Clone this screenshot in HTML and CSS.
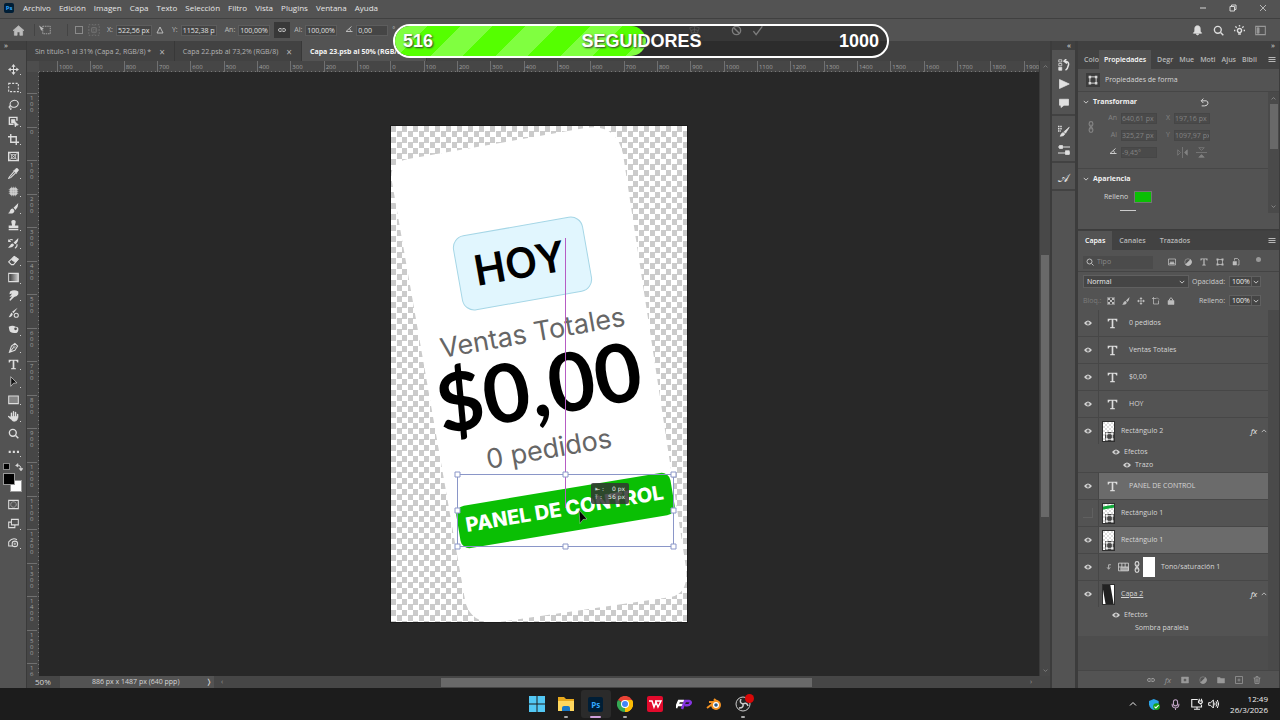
FILE: index.html
```html
<!DOCTYPE html>
<html lang="es">
<head>
  <meta charset="UTF-8">
  <title>Capa 23.psb al 50%</title>
  <link rel="stylesheet" href="styles.css">
</head>
<body>
  <!-- icon set -->
  <svg class="sprite" aria-hidden="true">
    <symbol id="home" viewBox="0 0 16 16"><path fill="currentColor" d="M8 1 0 8h2v7h4v-5h4v5h4V8h2z"/></symbol>
    <symbol id="pick" viewBox="0 0 16 16"><path d="M5 3h10v10H5z" stroke-dasharray="2 1"/><path fill="currentColor" stroke="none" d="M0 2l6 4-3 3z"/></symbol>
    <symbol id="ref" viewBox="0 0 16 16"><path d="M1 1h14v14H1z" stroke-dasharray="2 2"/><path d="M5 5h6v6H5z"/><path d="M8 1v14M1 8h14" stroke-dasharray="1 2"/></symbol>
    <symbol id="delta" viewBox="0 0 16 16"><path stroke-width="2" d="M8 2 2 14h12z"/></symbol>
    <symbol id="chain" viewBox="0 0 16 16"><path stroke-width="2" d="M7 5H4a3 3 0 0 0 0 6h3M9 5h3a3 3 0 0 1 0 6H9M5 8h6"/></symbol>
    <symbol id="chainv" viewBox="0 0 10 20"><rect x="2" y="1" width="6" height="8" rx="3" stroke-width="2"/><rect x="2" y="11" width="6" height="8" rx="3" stroke-width="2"/><path stroke-width="2" d="M5 6v8"/></symbol>
    <symbol id="angle" viewBox="0 0 16 16"><path stroke-width="2" d="M13 3 2 13h13M8 7c2 1 3 3 3 6"/></symbol>
    <symbol id="warp" viewBox="0 0 16 16"><path d="M1 4q7-4 14 0l-3 8q-4-3-8 0zM3 8q5-3 10 0M8 2v9"/></symbol>
    <symbol id="cancel" viewBox="0 0 16 16"><circle cx="8" cy="8" r="6" stroke-width="2"/><path stroke-width="2" d="m4 4 8 8"/></symbol>
    <symbol id="check" viewBox="0 0 16 16"><path stroke-width="2" d="m2 9 4 5 9-12"/></symbol>
    <symbol id="bell" viewBox="0 0 16 16"><path fill="currentColor" d="M8 1c-3 0-4 2-4 5v3l-2 3h12l-2-3V6c0-3-1-5-4-5zM6 13h4q-2 3-4 0z"/></symbol>
    <symbol id="search" viewBox="0 0 16 16"><circle cx="7" cy="7" r="5" stroke-width="2"/><path stroke-width="2" d="m11 11 4 4"/></symbol>
    <symbol id="bulb" viewBox="0 0 16 16"><circle cx="8" cy="8" r="3" stroke-width="2"/><path stroke-width="2" d="M6 13h4M8 0v2M0 8h2M14 8h2M2 2l2 2M14 2l-2 2"/></symbol>
    <symbol id="space" viewBox="0 0 16 16"><path stroke-width="1.5" d="M1 2h14v12H1z"/><path fill="currentColor" d="M3 4h3v8H3z"/></symbol>
    <symbol id="min" viewBox="0 0 16 16"><path stroke-width="2" d="M2 8h12"/></symbol>
    <symbol id="restore" viewBox="0 0 16 16"><path stroke-width="2" d="M2 5h9v9H2zM5 5V2h9v9h-3"/></symbol>
    <symbol id="close" viewBox="0 0 16 16"><path stroke-width="1.5" d="m2 2 12 12M14 2 2 14"/></symbol>
    <symbol id="move" viewBox="0 0 16 16"><path d="M8 2v12M2 8h12" stroke-width="1.5"/><path fill="currentColor" stroke="none" d="M8 0l3 4H5zM8 16l3-4H5zM0 8l4-3v6zM16 8l-4-3v6z"/></symbol>
    <symbol id="marquee" viewBox="0 0 16 16"><path stroke-width="1.5" stroke-dasharray="3 2" d="M1 2h14v12H1z"/></symbol>
    <symbol id="lasso" viewBox="0 0 16 16"><ellipse cx="9" cy="7" rx="6" ry="5" stroke-width="1.5" transform="rotate(-15 9 7)"/><path stroke-width="1.5" d="M4 10c-3 0-3 3-1 3s2 2 0 3"/></symbol>
    <symbol id="objsel" viewBox="0 0 16 16"><path stroke-width="2" d="M8 12H2V2h11v5"/><path fill="currentColor" d="M5 5h5v5H5zM9 7l6 6-3 .5-1.500 2.500z"/></symbol>
    <symbol id="crop" viewBox="0 0 16 16"><path stroke-width="2" d="M4 0v12h12M0 4h12v12"/></symbol>
    <symbol id="frame" viewBox="0 0 16 16"><path stroke-width="2" d="M1 2h14v12H1z"/><path d="m1 2 14 12M15 2 1 14M5 5h6v6H5z"/></symbol>
    <symbol id="dropper" viewBox="0 0 16 16"><path stroke-width="1.5" d="m9 5-7 8-1 2 3-1 7-7"/><path fill="currentColor" d="m8 4 4 4 1-2q4-3 1-5-2-2-4 2z"/></symbol>
    <symbol id="patch" viewBox="0 0 16 16"><rect x="3" y="3" width="10" height="10" rx="2" fill="currentColor" fill-opacity=".7"/><path d="M5 1v14M8 1v14M11 1v14M1 5h14M1 8h14M1 11h14" stroke-opacity=".6"/></symbol>
    <symbol id="brush" viewBox="0 0 16 16"><path fill="currentColor" stroke="none" d="M15 0 8 7l3 3q4-4 4-10zM7 8q-3 0-4 3-.5 3-3 4 6 1 8-1 2-2 1-4z"/></symbol>
    <symbol id="stamp" viewBox="0 0 16 16"><path fill="currentColor" stroke="none" d="M8 0q4 0 3 4l-1 4h5v4H1V8h5L5 4q-1-4 3-4zM1 13h14v2H1z"/></symbol>
    <symbol id="histbrush" viewBox="0 0 16 16"><path fill="currentColor" stroke="none" d="m15 0-7 7 3 2q4-3 4-9zM7 8q-3 0-4 3l-3 3q6 1 9-4z"/><path d="M1 5q2-4 6-2M1 2v3h3M13 9q1 4-3 6" stroke-width="1.500"/></symbol>
    <symbol id="eraser" viewBox="0 0 16 16"><path stroke-width="1.500" d="m9 2 6 4-7 8H5l-4-4z"/><path fill="currentColor" d="m9 2 6 4-4 5-6-4z"/></symbol>
    <symbol id="gradient" viewBox="0 0 16 16"><path fill="url(#fade)" stroke-width="1.500" d="M1 2h14v12H1z"/></symbol>
    <symbol id="smudge" viewBox="0 0 16 16"><path fill="currentColor" stroke="none" d="M3 2q6-3 12 0v4q-2 4-6 4l-6 6-1-2 4-5-4 1 4-5-4 1z"/></symbol>
    <symbol id="mixer" viewBox="0 0 16 16"><path fill="currentColor" stroke="none" d="M14 1 6 7l2 2zM5 8 1 15q5-1 6-5z"/><circle cx="12" cy="12" r="3" stroke-width="1.500"/></symbol>
    <symbol id="sponge" viewBox="0 0 16 16"><path fill="currentColor" stroke="none" fill-rule="evenodd" d="M1 4q6-3 10 0 5 0 4 5-1 5-6 4-6 0-7-4zm8 3a2 2 0 1 0 4 0 2 2 0 1 0-4 0z"/></symbol>
    <symbol id="pen" viewBox="0 0 16 16"><path stroke-width="1.500" d="m10 2 4 4-4 6-8 3 3-9zM2 15l6-7"/><circle cx="9" cy="7" r="1.500"/></symbol>
    <symbol id="type" viewBox="0 0 16 16"><path fill="currentColor" stroke="none" d="M1 1h14v4h-1.500Q13 2.500 11 2.500H9.200V13l2.300.6V15h-7v-1.400l2.300-.6V2.500H5Q3 2.500 2.500 5H1z"/></symbol>
    <symbol id="arrow" viewBox="0 0 16 16"><path fill="#111" stroke="#ddd" d="m4 1 9 9-5 .5L4 15z"/></symbol>
    <symbol id="shape" viewBox="0 0 16 16"><path fill="#858585" stroke-width="1.500" d="M1 3h14v11H1z"/></symbol>
    <symbol id="hand" viewBox="0 0 16 16"><path stroke-linecap="round" stroke-width="2" d="M5 9V3M8 8V1M11 8V2M14 9V5M4 11 1 8"/><path fill="currentColor" d="M4 8h10v3q-1 4-5 4-3 0-5-4z"/></symbol>
    <symbol id="dots" viewBox="0 0 16 16"><path fill="currentColor" stroke="none" d="M1 7h3v3H1zM7 7h3v3H7zM13 7h3v3h-3z"/></symbol>
    <symbol id="swap" viewBox="0 0 16 16"><path stroke-width="2" d="M3 5q9-2 9 7"/><path fill="currentColor" d="M1 5l5-4v7zM8 11h8l-4 5z"/></symbol>
    <symbol id="mask" viewBox="0 0 16 16"><path stroke-width="1.500" d="M1 2h14v12H1z"/><circle cx="8" cy="8" r="4" stroke-dasharray="2 1"/></symbol>
    <symbol id="screens" viewBox="0 0 16 16"><path stroke-width="1.500" d="M5 2h10v8H5zM5 6H1v8h9v-4"/></symbol>
    <symbol id="genai" viewBox="0 0 16 16"><path stroke-width="1.500" d="M1 7q6-7 12-3M1 7v6h6"/><circle cx="10" cy="10" r="4" stroke-width="1.500"/><path d="M10 8v4M8 10h4"/></symbol>
    <symbol id="history" viewBox="0 0 16 16"><path d="M1 1h4v3H1zM1 6h4v3H1z"/><path fill="currentColor" d="M1 11h4v4H1z"/><path stroke-width="2" d="M9 3q6 0 5 5-1 5-4 7M11 0 8 3l4 3"/></symbol>
    <symbol id="play" viewBox="0 0 16 16"><path fill="currentColor" d="m2 2 13 6-13 6z"/></symbol>
    <symbol id="note" viewBox="0 0 16 16"><path fill="currentColor" d="M2 3h12v8H8l-4 3v-3H2z"/></symbol>
    <symbol id="brushset" viewBox="0 0 16 16"><path stroke-width="2" stroke-dasharray="2 1" d="M0 2h6M0 5h6M0 8h4"/><path fill="currentColor" d="M15 3 8 9l2 2zM7 10q-3 1-4 5 5 0 6-3z"/></symbol>
    <symbol id="sliders" viewBox="0 0 16 16"><path stroke-width="1.500" d="M0 4h16M0 12h16"/><path fill="currentColor" d="M2 2h4v4H2zM10 9h5v5h-5z"/></symbol>
    <symbol id="burger" viewBox="0 0 16 16"><path stroke-width="2" d="M1 3h14M1 7h14M1 11h14"/></symbol>
    <symbol id="bbox" viewBox="0 0 16 16"><path stroke-width="1.500" d="M3 3h10v10H3z"/><path fill="currentColor" stroke="none" d="M1 1h4v4H1zM11 1h4v4h-4zM1 11h4v4H1zM11 11h4v4h-4z"/></symbol>
    <symbol id="reset" viewBox="0 0 16 16"><path stroke-width="1.500" d="M3 5h8q4 1 3 5-1 4-6 4H3M6 1 2 5l4 4"/></symbol>
    <symbol id="down" viewBox="0 0 16 16"><path stroke-width="2" d="m2 5 6 6 6-6"/></symbol>
    <symbol id="up" viewBox="0 0 16 16"><path stroke-width="2" d="m2 11 6-6 6 6"/></symbol>
    <symbol id="fliph" viewBox="0 0 16 16"><path d="M8 0v16M1 4v8l4-4z"/><path fill="currentColor" d="M15 4v8l-4-4z"/></symbol>
    <symbol id="flipv" viewBox="0 0 16 16"><path d="M0 8h16M4 1h8L8 5z"/><path fill="currentColor" d="M4 15h8l-4-4z"/></symbol>
    <symbol id="image" viewBox="0 0 16 16"><path stroke-width="1.500" d="M1 2h14v12H1z"/><path fill="currentColor" d="m3 12 3-5 2 3 2-3 3 5z"/></symbol>
    <symbol id="half" viewBox="0 0 16 16"><circle cx="8" cy="8" r="6.500"/><path fill="currentColor" d="M13 3 3 13A7 7 0 0 0 13 3z"/></symbol>
    <symbol id="smart" viewBox="0 0 16 16"><path stroke-width="1.500" d="M5 5V1h6l3 3v10h-3"/><path fill="currentColor" d="M2 7h7v7H2z"/></symbol>
    <symbol id="checker" viewBox="0 0 16 16"><path d="M1 1h14v14H1z"/><path fill="currentColor" stroke="none" d="M2 2h4v4H2zM10 2h4v4h-4zM6 6h4v4H6zM2 10h4v4H2zM10 10h4v4h-4z"/></symbol>
    <symbol id="artboard" viewBox="0 0 16 16"><path stroke-width="1.500" d="M3 0v14h10V7M0 3h9M10 1l4 4"/></symbol>
    <symbol id="lock" viewBox="0 0 16 16"><path stroke-width="2" d="M5 7V4q3-5 6 0v3"/><path fill="currentColor" d="M2 7h12v8H2z"/></symbol>
    <symbol id="eye" viewBox="0 0 16 16"><path fill="currentColor" stroke="none" fill-rule="evenodd" d="M0 8q8-10 16 0-8 10-16 0zm5 0a3 3 0 1 0 6 0 3 3 0 1 0-6 0z"/><circle cx="8" cy="8" r="1" fill="currentColor" stroke="none"/></symbol>
    <symbol id="clip" viewBox="0 0 16 16"><path stroke-width="2" d="M13 2H7v10M3 9l4 5 4-5"/></symbol>
    <symbol id="hue" viewBox="0 0 20 16"><path stroke-width="1.500" d="M1 1h18v14H1zM1 8h18M7 1v7M13 1v7"/><path fill="currentColor" fill-opacity=".6" d="M5 9h14v5H5z"/></symbol>
    <symbol id="addmask" viewBox="0 0 16 16"><path fill="currentColor" fill-rule="evenodd" d="M1 2h14v12H1zm4 6a3 3 0 1 0 6 0 3 3 0 1 0-6 0z"/></symbol>
    <symbol id="folder" viewBox="0 0 16 16"><path fill="currentColor" d="M1 3h5l2 2h7v9H1z"/></symbol>
    <symbol id="plus" viewBox="0 0 16 16"><path stroke-width="1.500" d="M1 1h14v14H1zM8 5v6M5 8h6"/></symbol>
    <symbol id="trash" viewBox="0 0 16 16"><path stroke-width="1.500" d="M1 4h14M6 4V1h4v3M3 4l1 11h8l1-11M6 6v7M8 6v7M10 6v7"/></symbol>
    <symbol id="mic" viewBox="0 0 16 16"><rect x="5" y="1" width="6" height="9" rx="3" stroke-width="1.500"/><path d="M3 7q0 6 5 6t5-6M8 13v3" stroke-width="1.500"/></symbol>
    <symbol id="monitor" viewBox="0 0 16 16"><path stroke-width="1.500" d="M9 2H1v10h13V9M4 15h8M8 12v3M11 1v3M14 1v3M10 4h5v2l-2 2-3-2z"/></symbol>
    <symbol id="speaker" viewBox="0 0 18 16"><path stroke-width="1.500" d="M1 6h3l4-4v12l-4-4H1zM10 6q1 2 0 4M12 4q3 4 0 8M14 2q4 6 0 12"/></symbol>
    <linearGradient id="fade"><stop stop-color="#333"/><stop offset="1" stop-color="#ccc"/></linearGradient>
  </svg>

  <header class="menubar">
    <span class="ps-logo">Ps</span>
    <nav class="menus">
      <button>Archivo</button><button>Edición</button><button>Imagen</button><button>Capa</button><button>Texto</button><button>Selección</button><button>Filtro</button><button>Vista</button><button>Plugins</button><button>Ventana</button><button>Ayuda</button>
    </nav>
    <div class="window-buttons">
      <button aria-label="Minimizar"><svg class="icon"><use href="#min"/></svg></button>
      <button aria-label="Restaurar"><svg class="icon"><use href="#restore"/></svg></button>
      <button aria-label="Cerrar"><svg class="icon"><use href="#close"/></svg></button>
    </div>
  </header>

  <div class="options">
    <button class="home" aria-label="Inicio"><svg class="icon"><use href="#home"/></svg></button>
    <button class="preset" aria-label="Transformar"><svg class="icon"><use href="#pick"/></svg></button>
    <input type="checkbox" aria-label="Punto de referencia">
    <svg class="icon ref"><use href="#ref"/></svg>
    <label for="pos-x">X:</label><input id="pos-x" class="pos" type="text" value="522,56 px">
    <svg class="icon delta"><use href="#delta"/></svg>
    <label for="pos-y">Y:</label><input id="pos-y" class="pos" type="text" value="1152,38 px">
    <label class="spaced" for="scale-w">An:</label><input id="scale-w" type="text" value="100,00%">
    <button class="link" aria-label="Vincular"><svg class="icon"><use href="#chain"/></svg></button>
    <label for="scale-h">Al:</label><input id="scale-h" type="text" value="100,00%">
    <label class="spaced" for="rot" aria-label="Ángulo"><svg class="icon"><use href="#angle"/></svg></label><input id="rot" type="text" value="0,00">
    <span class="degree">°</span>
    <div class="commit">
      <svg class="icon dim"><use href="#warp"/></svg>
      <button aria-label="Cancelar"><svg class="icon"><use href="#cancel"/></svg></button>
      <button aria-label="Aceptar"><svg class="icon"><use href="#check"/></svg></button>
    </div>
    <div class="app-actions">
      <button aria-label="Avisos"><svg class="icon"><use href="#bell"/></svg></button>
      <button aria-label="Buscar"><svg class="icon"><use href="#search"/></svg></button>
      <button aria-label="Novedades"><svg class="icon"><use href="#bulb"/></svg></button>
      <button class="dim" aria-label="Espacio de trabajo"><svg class="icon"><use href="#space"/></svg></button>
    </div>
  </div>

  <main class="workspace">
    <aside class="toolbox">
      <div class="dock-head left">»</div>
      <div class="tools">
        <button aria-label="Mover"><svg class="icon"><use href="#move"/></svg></button>
        <button aria-label="Marco rectangular"><svg class="icon"><use href="#marquee"/></svg></button>
        <button aria-label="Lazo"><svg class="icon"><use href="#lasso"/></svg></button>
        <button aria-label="Selección de objetos"><svg class="icon"><use href="#objsel"/></svg></button>
        <button aria-label="Recortar"><svg class="icon"><use href="#crop"/></svg></button>
        <button class="single" aria-label="Marco"><svg class="icon"><use href="#frame"/></svg></button>
        <button aria-label="Cuentagotas"><svg class="icon"><use href="#dropper"/></svg></button>
        <button aria-label="Pincel corrector"><svg class="icon"><use href="#patch"/></svg></button>
        <button aria-label="Pincel"><svg class="icon"><use href="#brush"/></svg></button>
        <button aria-label="Tampón de clonar"><svg class="icon"><use href="#stamp"/></svg></button>
        <button aria-label="Pincel de historia"><svg class="icon"><use href="#histbrush"/></svg></button>
        <button aria-label="Borrador"><svg class="icon"><use href="#eraser"/></svg></button>
        <button aria-label="Degradado"><svg class="icon"><use href="#gradient"/></svg></button>
        <button aria-label="Dedo"><svg class="icon"><use href="#smudge"/></svg></button>
        <button class="single" aria-label="Pincel mezclador"><svg class="icon"><use href="#mixer"/></svg></button>
        <button aria-label="Esponja"><svg class="icon"><use href="#sponge"/></svg></button>
        <button aria-label="Pluma"><svg class="icon"><use href="#pen"/></svg></button>
        <button aria-label="Texto"><svg class="icon"><use href="#type"/></svg></button>
        <button aria-label="Selección de trazado"><svg class="icon"><use href="#arrow"/></svg></button>
        <button aria-label="Rectángulo"><svg class="icon"><use href="#shape"/></svg></button>
        <button aria-label="Mano"><svg class="icon"><use href="#hand"/></svg></button>
        <button class="single" aria-label="Zoom"><svg class="icon"><use href="#search"/></svg></button>
        <button aria-label="Más"><svg class="icon"><use href="#dots"/></svg></button>
      </div>
      <div class="swap-row"><i class="mini-swatch"></i><svg class="icon"><use href="#swap"/></svg></div>
      <div class="swatches"><i class="back"></i><i class="front"></i></div>
      <div class="modes">
        <button class="single" aria-label="Máscara rápida"><svg class="icon"><use href="#mask"/></svg></button>
        <button aria-label="Modo de pantalla"><svg class="icon"><use href="#screens"/></svg></button>
        <button aria-label="Generar"><svg class="icon"><use href="#genai"/></svg></button>
      </div>
    </aside>

    <section class="document">
      <div class="doc-tabs">
        <button>Sin título-1 al 31% (Capa 2, RGB/8) * <b>×</b></button>
        <button>Capa 22.psb al 73,2% (RGB/8) <b>×</b></button>
        <button class="active">Capa 23.psb al 50% (RGB/8) <b>×</b></button>
      </div>
      <div class="doc-body">
        <div class="ruler-corner"></div>
        <div class="ruler-x"><div class="track" id="ruler-x"></div></div>
        <div class="ruler-y"><div class="track" id="ruler-y"></div></div>
        <div class="canvas">
          <svg class="artboard" viewBox="0 0 296 496">
            <path fill="#fff" d="M1 56Q-3 37 17 33L194 2Q225-3 232 28L295 442Q298 467 280 471L108 496Q79 499 74 474Z"/>
            <rect x="66" y="100" width="131" height="75" rx="12" fill="#e1f6fe" stroke="#a5d6e6" transform="rotate(-10 131.500 137.500)"/>
            <text class="art-day" transform="translate(86 160) rotate(-10)">HOY</text>
            <text class="art-label" transform="translate(51 232) rotate(-10)">Ventas Totales</text>
            <text class="art-amount" transform="translate(51 308) rotate(-10)">$0,00</text>
            <text class="art-label" transform="translate(97 343) rotate(-10)">0 pedidos</text>
            <rect x="66" y="363" width="217" height="43" rx="9" fill="#0abf04" transform="rotate(-9.450 174.500 384.500)"/>
            <text class="art-button" transform="translate(76 406) rotate(-9.450)">PANEL DE CONTROL</text>
            <path stroke="#b65cc4" d="M174.500 112v270"/>
            <path fill="none" stroke="#8a96c8" d="M66.500 348.500h216v72h-216z"/>
            <g fill="#fff" stroke="#8a96c8">
              <path d="M64 346h5v5h-5zM172 346h5v5h-5zM280 346h5v5h-5zM64 382h5v5h-5zM280 382h5v5h-5zM64 418h5v5h-5zM172 418h5v5h-5zM280 418h5v5h-5z"/>
            </g>
            <rect x="200" y="357" width="38" height="21" rx="2" fill="#333" fill-opacity=".85"/>
            <g class="hint"><text x="204" y="365">⇤ :</text><text x="234" y="365" text-anchor="end">0 px</text><text x="204" y="373">⤒ :</text><text x="234" y="373" text-anchor="end">56 px</text></g>
            <path fill="#000" stroke="#ccc" stroke-width=".5" d="m188 384 8 9-4 .5-3 4z"/>
          </svg>
        </div>
        <div class="scroll-y"><svg class="icon"><use href="#up"/></svg><i></i><svg class="icon"><use href="#down"/></svg></div>
      </div>
      <footer class="status">
        <span class="zoom">50%</span>
        <button class="doc-info"><span>886 px x 1487 px (640 ppp)</span><span>❭</span></button>
        <div class="scroll-x"><span>‹</span><i></i><span>›</span></div>
      </footer>
    </section>

    <aside class="icon-dock">
      <div class="dock-head">«</div>
      <div class="dock-group"><button aria-label="Historia"><svg class="icon"><use href="#history"/></svg></button><button aria-label="Acciones"><svg class="icon"><use href="#play"/></svg></button><button aria-label="Comentarios"><svg class="icon"><use href="#note"/></svg></button></div>
      <div class="dock-group"><button aria-label="Pinceles"><svg class="icon"><use href="#brushset"/></svg></button><button aria-label="Ajustes"><svg class="icon"><use href="#sliders"/></svg></button></div>
      <div class="dock-group"><button class="glyph">𝒜</button></div>
    </aside>

    <aside class="panels">
      <div class="dock-head">»</div>
      <section class="properties">
        <div class="panel-tabs">
          <button class="cut">Colo</button><button class="active">Propiedades</button><button class="cut">Degr</button><button class="cut">Mue</button><button class="cut">Moti</button><button class="cut">Ajus</button><button class="cut">Bibli</button>
          <svg class="icon menu"><use href="#burger"/></svg>
        </div>
        <div class="prop-title"><span class="prop-icon"><svg class="icon"><use href="#bbox"/></svg></span>Propiedades de forma</div>
        <div class="prop-body">
          <div class="prop-main">
            <div class="group transform">
              <h2><svg class="icon"><use href="#down"/></svg>Transformar<svg class="icon reset"><use href="#reset"/></svg></h2>
              <div class="fields">
                <svg class="icon chainv"><use href="#chainv"/></svg>
                <label for="w">An</label><input id="w" type="text" value="640,61 px" disabled>
                <label for="x">X</label><input id="x" type="text" value="197,16 px" disabled>
                <label for="h">Al</label><input id="h" type="text" value="325,27 px" disabled>
                <label for="y">Y</label><input id="y" type="text" value="1097,97 px" disabled>
                <label class="lit" for="a" aria-label="Ángulo"><svg class="icon"><use href="#angle"/></svg></label><input id="a" type="text" value="-9,45°" disabled>
                <span class="flips"><svg class="icon"><use href="#fliph"/></svg><svg class="icon"><use href="#flipv"/></svg></span>
              </div>
            </div>
            <div class="group looks">
              <h2><svg class="icon"><use href="#down"/></svg>Apariencia</h2>
              <div class="fill-row">Relleno<button class="fill" aria-label="Color de relleno"></button></div>
              <i class="stroke-line"></i>
            </div>
          </div>
          <div class="prop-scroll"><svg class="icon"><use href="#up"/></svg><i></i><svg class="icon"><use href="#down"/></svg></div>
        </div>
      </section>

      <section class="layers">
        <div class="panel-tabs roomy">
          <button class="active">Capas</button><button>Canales</button><button>Trazados</button>
          <svg class="icon menu"><use href="#burger"/></svg>
        </div>
        <div class="filter-row">
          <label class="search"><svg class="icon"><use href="#search"/></svg><input type="text" placeholder="Tipo" aria-label="Tipo"></label>
          <svg class="icon"><use href="#image"/></svg><svg class="icon"><use href="#half"/></svg><svg class="icon"><use href="#type"/></svg><svg class="icon"><use href="#bbox"/></svg><svg class="icon"><use href="#smart"/></svg>
          <i class="filter-dot"></i>
        </div>
        <div class="blend-row">
          <span class="select"><select aria-label="Modo de fusión"><option>Normal</option></select><svg class="icon"><use href="#down"/></svg></span>
          <label for="opacity">Opacidad:</label><span class="percent"><input id="opacity" type="text" value="100%"><svg class="icon"><use href="#down"/></svg></span>
        </div>
        <div class="blend-row">
          <span class="locks"><span class="faint">Bloq.:</span><svg class="icon"><use href="#checker"/></svg><svg class="icon"><use href="#brush"/></svg><svg class="icon"><use href="#move"/></svg><svg class="icon"><use href="#artboard"/></svg><svg class="icon"><use href="#lock"/></svg></span>
          <label for="fill">Relleno:</label><span class="percent"><input id="fill" type="text" value="100%"><svg class="icon"><use href="#down"/></svg></span>
        </div>
        <div class="layer-area">
          <ul class="layer-list">
            <li class="layer"><button class="vis" aria-label="Visible"><svg class="icon"><use href="#eye"/></svg></button><div class="layer-body text"><svg class="icon"><use href="#type"/></svg>0 pedidos</div></li>
            <li class="layer"><button class="vis" aria-label="Visible"><svg class="icon"><use href="#eye"/></svg></button><div class="layer-body text"><svg class="icon"><use href="#type"/></svg>Ventas Totales</div></li>
            <li class="layer"><button class="vis" aria-label="Visible"><svg class="icon"><use href="#eye"/></svg></button><div class="layer-body text"><svg class="icon"><use href="#type"/></svg>$0,00</div></li>
            <li class="layer"><button class="vis" aria-label="Visible"><svg class="icon"><use href="#eye"/></svg></button><div class="layer-body text"><svg class="icon"><use href="#type"/></svg>HOY</div></li>
            <li class="layer plain"><button class="vis" aria-label="Visible"><svg class="icon"><use href="#eye"/></svg></button><div class="layer-body"><span class="thumb"><svg class="icon"><use href="#bbox"/></svg></span>Rectángulo 2<em>fx</em><svg class="icon fold"><use href="#up"/></svg></div></li>
            <li class="effects"><span><svg class="icon"><use href="#eye"/></svg>Efectos</span><span class="deep"><svg class="icon"><use href="#eye"/></svg>Trazo</span></li>
            <li class="layer selected"><button class="vis" aria-label="Visible"><svg class="icon"><use href="#eye"/></svg></button><div class="layer-body text"><svg class="icon"><use href="#type"/></svg>PANEL DE CONTROL</div></li>
            <li class="layer"><button class="vis off" aria-label="Oculta"></button><div class="layer-body"><span class="thumb green"><svg class="icon"><use href="#bbox"/></svg></span>Rectángulo 1</div></li>
            <li class="layer selected"><button class="vis" aria-label="Visible"><svg class="icon"><use href="#eye"/></svg></button><div class="layer-body"><span class="thumb"><svg class="icon"><use href="#bbox"/></svg></span>Rectángulo 1</div></li>
            <li class="layer"><button class="vis" aria-label="Visible"><svg class="icon"><use href="#eye"/></svg></button><div class="layer-body adjust"><svg class="icon clip"><use href="#clip"/></svg><svg class="icon hue"><use href="#hue"/></svg><svg class="icon chainv"><use href="#chainv"/></svg><span class="white-mask"></span>Tono/saturación 1</div></li>
            <li class="layer plain"><button class="vis" aria-label="Visible"><svg class="icon"><use href="#eye"/></svg></button><div class="layer-body"><span class="thumb photo"></span><u>Capa 2 </u><em>fx</em><svg class="icon fold"><use href="#up"/></svg></div></li>
            <li class="effects last"><span><svg class="icon"><use href="#eye"/></svg>Efectos</span><span class="deep bare">Sombra paralela</span></li>
          </ul>
        </div>
        <div class="layer-actions">
          <button aria-label="Enlazar"><svg class="icon"><use href="#chain"/></svg></button><button class="fx">fx</button><button aria-label="Máscara"><svg class="icon"><use href="#addmask"/></svg></button><button aria-label="Ajuste"><svg class="icon"><use href="#half"/></svg></button><button aria-label="Grupo"><svg class="icon"><use href="#folder"/></svg></button><button aria-label="Nueva capa"><svg class="icon"><use href="#plus"/></svg></button><button aria-label="Eliminar"><svg class="icon"><use href="#trash"/></svg></button>
        </div>
      </section>
    </aside>
  </main>

  <!-- stream overlay -->
  <div class="goal">
    <div class="goal-fill"></div>
    <span>516</span><span>SEGUIDORES</span><span>1000</span>
  </div>

  <footer class="taskbar">
    <div class="apps">
      <button aria-label="Inicio"><svg viewBox="0 0 16 16"><path fill="#53c8f5" d="M0 0h7.500v7.500H0zM8.500 0H16v7.500H8.500zM0 8.500h7.500V16H0zM8.500 8.500H16V16H8.500z"/></svg></button>
      <button class="open" aria-label="Explorador"><svg viewBox="0 0 16 16"><path fill="#e8a91d" d="M0 1h6l2 2h8v12H0z"/><path fill="#ffd75e" d="M0 5h16v10H0z"/><path fill="#1878c8" d="M4 15v-3q0-2 2-2h4q2 0 2 2v3z"/></svg></button>
      <button class="open current" aria-label="Photoshop"><span class="ps-logo big">Ps</span></button>
      <button class="open" aria-label="Chrome"><svg viewBox="0 0 16 16"><path fill="#ea4335" d="M8 8 1 4a8 8 0 0 1 14 0z"/><path fill="#fbbc05" d="M8 8l7-4a8 8 0 0 1-7 12z"/><path fill="#34a853" d="M8 8v8A8 8 0 0 1 1 4z"/><path fill="#fbbc05" d="M9 4h6a8 8 0 0 1-7 12l4-7z"/><circle cx="8" cy="8" r="4" fill="#fff"/><circle cx="8" cy="8" r="3" fill="#4285f4"/></svg></button>
      <button aria-label="WPS"><svg viewBox="0 0 16 16"><rect width="16" height="16" rx="2" fill="#e20a2c"/><path fill="none" stroke="#fff" stroke-width="1.500" d="M2 5h3l2 6 2-5 2 5 3-6H8"/></svg></button>
      <button aria-label="FP"><svg viewBox="0 0 16 16"><path fill="none" stroke="#fff" stroke-width="2.500" d="M0 12l3-7h5M2 9h5"/><path fill="none" stroke="#8434e0" stroke-width="2.500" d="m6 13 3-8h4q3 1 1 3-1 2-5 1"/></svg></button>
      <button aria-label="Blender"><svg viewBox="0 0 16 16"><path fill="none" stroke="#f39223" stroke-width="2" d="M1 12l8-6H3M8 3l5 4"/><circle cx="10" cy="9" r="5" fill="#f39223"/><circle cx="10" cy="9" r="3" fill="#fff"/><circle cx="10" cy="9" r="1.800" fill="#265787"/></svg></button>
      <button class="open" aria-label="OBS"><svg viewBox="0 0 16 16"><circle cx="8" cy="8" r="7" fill="#222" stroke="#ccc"/><path fill="none" stroke="#ccc" stroke-width="1.500" d="M8 8Q4 7 6 3M8 8q4-2 5 2M8 8q1 4-4 4"/></svg><i class="rec"></i></button>
    </div>
    <div class="tray">
      <svg class="icon"><use href="#up"/></svg>
      <svg class="shield" viewBox="0 0 16 16"><path fill="#2aa4e8" d="M7 0l7 3v5q-1 6-7 8-6-2-7-8V3z"/><circle cx="11" cy="11" r="5" fill="#18a318"/><path fill="none" stroke="#fff" stroke-width="1.500" d="m8 11 2 2 4-4"/></svg>
      <svg class="icon mic"><use href="#mic"/></svg>
      <svg class="icon sys"><use href="#monitor"/></svg>
      <svg class="icon sys"><use href="#speaker"/></svg>
      <div class="clock">12:49<br>26/3/2026</div>
    </div>
  </footer>
  <script src="rulers.js"></script>
</body>
</html>
```
FILE: styles.css
```css
* { box-sizing: border-box; }
body { margin: 0; height: 100vh; display: flex; flex-direction: column; overflow: hidden; background: #535353; color: #d6d6d6; font: 7px/10px "Open Sans", "Noto Sans", sans-serif; }
button, input, select { margin: 0; padding: 0; border: 0; background: none; color: inherit; font: inherit; }
button { display: flex; align-items: center; justify-content: center; white-space: nowrap; }
h2, ul { margin: 0; padding: 0; list-style: none; }
.sprite { position: absolute; width: 0; height: 0; }
.icon { width: 8px; height: 8px; flex: none; fill: none; stroke: currentColor; }
.dim { opacity: .5; }
.ps-logo { width: 10px; height: 10px; border-radius: 2px; background: #001e36; color: #31a8ff; font: bold 6px/10px "Open Sans", sans-serif; text-align: center; }
.ps-logo.big { width: 15px; height: 15px; font-size: 8px; line-height: 15px; }

/* menu bar */
.menubar { height: 18px; flex: none; display: flex; align-items: center; padding: 0 13px 3px 4px; font-size: 8px; }
.menus { display: flex; gap: 8px; margin-left: 9px; color: #e6e6e6; }
.window-buttons { display: flex; gap: 22px; margin-left: auto; }

/* options bar */
.options { height: 23px; flex: none; display: flex; align-items: center; border-top: 1px solid #404040; padding: 0 14px 0 13px; color: #bbb; }
.options input[type=text] { width: 32px; height: 11px; padding: 0 1px; background: #454545; border: 1px solid #5d5d5d; color: #e0e0e0; margin-left: 3px; }
.options input.pos { width: 36px; }
.options label.spaced { margin-left: 8px; }
.options input[type=checkbox] { appearance: none; width: 8px; height: 8px; border: 1px solid #8a8a8a; }
.home .icon { width: 11px; height: 11px; }
.preset { width: 34px; height: 12px; margin: 0 7px 0 10px; border: solid #444; border-width: 0 1px; justify-content: flex-start; padding-left: 4px; }
.preset .icon, .ref { width: 12px; height: 12px; }
.ref { margin: 0 7px 0 5px; opacity: .4; }
.delta { margin: 0 8px 0 4px; }
.link { width: 16px; height: 16px; margin: 0 4px; background: #383838; }
.degree { margin-left: 4px; }
.commit { display: flex; margin-left: 294px; }
.commit .icon { width: 11px; height: 11px; margin-right: 10px; }
.commit .dim { margin-right: 31px; }
.app-actions { display: flex; gap: 10px; margin-left: auto; color: #ddd; }
.app-actions .icon { width: 11px; height: 11px; }

/* workspace */
.workspace { flex: 1; min-height: 0; display: flex; background: #3f3f3f; }
.dock-head { height: 9px; flex: none; background: #404040; padding: 0 4px; text-align: right; font-size: 8px; line-height: 7px; }
.dock-head.left { text-align: left; }
.toolbox { width: 27px; flex: none; border-right: 1px solid #3a3a3a; background: #535353; }
.tools { height: 399px; margin-top: 11px; display: grid; grid-auto-rows: 1fr; color: #dedede; }
.tools button, .modes button { position: relative; width: 26px; }
.tools .icon, .modes .icon { width: 11px; height: 11px; }
.tools button::after, .modes button::after { content: ""; position: absolute; right: 5px; bottom: 3px; width: 1px; height: 1px; background: #ccc; }
.tools .single::after, .modes .single::after { display: none; }
.swap-row { display: flex; gap: 5px; padding: 3px 0 1px 3px; }
.mini-swatch { width: 7px; height: 7px; background: #000; border: 1px solid #888; }
.swatches { display: grid; grid-template-columns: 7px 5px 7px; grid-template-rows: 7px 5px 7px; margin: 1px 0 0 3px; }
.swatches i { border: 1px solid #999; }
.front { grid-area: 1 / 1 / 3 / 3; background: #000; }
.back { grid-area: 2 / 2 / 4 / 4; background: #fff; }
.modes { display: grid; grid-auto-rows: 19px; margin-top: 3px; color: #ddd; }

/* document */
.document { flex: 1; min-width: 0; display: flex; flex-direction: column; }
.doc-tabs { height: 20px; flex: none; display: flex; background: #424242; color: #b4b4b4; }
.doc-tabs button { padding: 1px 9px 0 8px; border-right: 1px solid #383838; }
.doc-tabs b { font-weight: normal; font-size: 10px; margin-left: 8px; }
.doc-tabs .active { background: #535353; color: #f4f4f4; font-weight: bold; }
.doc-body { flex: 1; min-height: 0; display: grid; grid-template: 11px 1fr / 12px 1fr 11px; }
.ruler-corner { background: #4d4d4d; }
.ruler-x, .ruler-y { overflow: hidden; background-color: #464646; color: #a0a0a0; font-size: 6px; }
.ruler-x { background-image: repeating-linear-gradient(90deg, #777 0 1px, transparent 1px 4px); background-size: 100% 1px; background-position: bottom; background-repeat: no-repeat; }
.ruler-y { background-image: repeating-linear-gradient(#777 0 1px, transparent 1px 4px); background-size: 1px 100%; background-position: right; background-repeat: no-repeat; }
.track { display: flex; }
.ruler-x .track { height: 11px; padding-left: 18px; width: calc(100% + 18px); }
.ruler-x .track span { flex: 0 0 calc(100% / 30); border-left: 1px solid #707070; padding-left: 1px; line-height: 12px; }
.ruler-y .track { flex-direction: column; height: calc(100% + 21px); padding-top: 21px; }
.ruler-y .track span { flex: 0 0 calc(100% / 18); border-top: 1px solid #707070; padding: 1px 3px 0; line-height: 6px; word-break: break-all; width: 10px; }
.canvas { background: #282828; display: flex; align-items: center; justify-content: center; }
.artboard { width: 296px; height: 496px; background: repeating-conic-gradient(#fff 0 25%, #cbcbcb 0 50%) 0 0 / 11px 11px; outline: 1px solid #1b1b1b; }
.art-day { font: 600 42px Inter, sans-serif; }
.art-label { font: 400 27px Inter, sans-serif; fill: #666; }
.art-amount { font: 700 81px Lato, sans-serif; }
.art-button { font: 800 20px Inter, sans-serif; fill: #fff; }
.hint { font: 6px "DejaVu Sans", sans-serif; fill: #eee; }
.scroll-y { grid-column: 3; grid-row: 1 / 3; background: #484848; border-left: 1px solid #3a3a3a; display: flex; flex-direction: column; align-items: center; padding: 3px 0; color: #999; }
.scroll-y .icon, .prop-scroll .icon { width: 5px; height: 5px; }
.scroll-y i { width: 8px; height: 43%; margin: 186px 0 auto; background: #696969; }
.status { height: 12px; flex: none; display: flex; background: #464646; line-height: 12px; }
.zoom { width: 33px; padding-left: 8px; font-size: 8px; }
.doc-info { width: 154px; padding: 0 2px 0 32px; justify-content: space-between; background: #535353; }
.scroll-x { flex: 1; display: flex; justify-content: space-between; padding: 0 18px 0 7px; color: #999; }
.scroll-x i { width: 371px; background: #696969; margin: 2px 0 1px; }

/* icon dock */
.icon-dock { width: 28px; flex: none; border: solid #3c3c3c; border-width: 0 3px 0 2px; background: #535353; color: #e0e0e0; }
.dock-group { display: grid; grid-auto-rows: 19px; padding: 5px 0 2px; border-bottom: 2px solid #424242; }
.dock-group .icon { width: 12px; height: 12px; }
.glyph { font: 12px "DejaVu Serif", "DejaVu Sans", serif; }

/* panels */
.panels { width: 202px; flex: none; display: flex; flex-direction: column; border-right: 1px solid #3c3c3c; }
.panel-tabs { height: 19px; flex: none; display: flex; align-items: stretch; background: #424242; color: #b8b8b8; }
.panel-tabs button { padding: 0 5px; font-weight: 600; }
.panel-tabs .active { background: #535353; color: #fff; }
.panel-tabs .cut { padding: 0; margin-left: 6px; }
.panel-tabs .menu { margin: 6px 3px 0 auto; }
.panel-tabs.roomy button { padding: 0 7px; }
.properties { height: 180px; flex: none; background: #535353; border-bottom: 1px solid #3c3c3c; }
.prop-title { height: 23px; display: flex; align-items: center; gap: 5px; padding-left: 8px; border-bottom: 1px solid #464646; }
.prop-icon { width: 14px; height: 14px; background: #3c3c3c; display: grid; place-items: center; }
.prop-icon .icon { width: 10px; height: 10px; }
.prop-body { display: flex; height: 137px; }
.prop-main { flex: 1; }
.group { border-bottom: 1px solid #474747; padding: 5px 0 0 5px; }
.looks { border: 0; }
h2 { display: flex; align-items: center; gap: 4px; font-size: 7px; line-height: 10px; color: #f0f0f0; }
h2 .icon { width: 6px; height: 6px; }
h2 .reset { width: 9px; height: 9px; margin-left: 59px; }
.fields { display: grid; grid-template-columns: 14px 19px 36px 17px 36px; grid-template-rows: repeat(3, 11px); gap: 6px 0; padding: 6px 0 10px 5px; color: #838383; }
.fields label { text-align: right; padding-right: 4px; }
.fields input { background: #4a4a4a; border: 1px solid #464646; width: 100%; min-width: 0; }
.fields .chainv { grid-row: 1 / 3; align-self: center; }
.fields .lit { grid-column: 2; color: #ccc; }
.flips { grid-column: 4 / 6; display: flex; gap: 8px; padding-left: 20px; }
.flips .icon { width: 11px; height: 11px; }
.chainv { width: 6px; height: 12px; }
.fill-row { display: flex; align-items: center; gap: 6px; padding: 7px 0 0 21px; }
.fill { width: 18px; height: 12px; background: #0abf04; border: 1px solid #747474; }
.stroke-line { display: block; width: 16px; height: 1px; margin: 7px 0 0 37px; background: #ccc; }
.prop-scroll { width: 11px; background: #4a4a4a; display: flex; flex-direction: column; align-items: center; padding: 4px 0; height: 121px; color: #aaa; }
.prop-scroll i { width: 8px; height: 45px; margin: 3px 0 auto; background: #696969; }

.layers { flex: 1; min-height: 0; display: flex; flex-direction: column; background: #535353; margin-top: 1px; }
.filter-row, .blend-row { height: 19px; flex: none; display: flex; align-items: center; padding-left: 5px; color: #bdbdbd; }
.filter-row { height: 22px; border-bottom: 1px solid #444; gap: 8px; padding-top: 3px; }
.search { width: 70px; height: 13px; background: #4b4b4b; display: flex; align-items: center; gap: 3px; padding-left: 3px; margin-right: 7px; }
.search input { width: 40px; }
.search input::placeholder { color: #888; }
.filter-dot { width: 5px; height: 5px; border-radius: 50%; background: #999; margin: 0 0 6px 8px; }
.blend-row label { width: 40px; padding-right: 4px; text-align: right; color: #ccc; }
.select, .locks { width: 106px; }
.select { height: 13px; display: flex; align-items: center; background: #454545; border: 1px solid #606060; padding: 0 3px; color: #eee; }
.select select { appearance: none; flex: 1; }
.select .icon, .percent .icon { width: 6px; height: 6px; }
.locks { display: flex; gap: 7px; align-items: center; }
.faint { color: #7c7c7c; margin-right: -1px; }
.percent { width: 32px; height: 11px; display: flex; align-items: center; background: #454545; border: 1px solid #606060; color: #eee; }
.percent input { width: 22px; padding-left: 2px; border-right: 1px solid #606060; }
.percent .icon { margin-left: 1px; }
.layer-area { flex: 1; min-height: 0; background: #4d4d4d; border-right: 11px solid #4a4a4a; }
.layer-list { background: #535353; }
.layer { height: 27px; display: flex; border-bottom: 1px solid #474747; }
.layer.plain { border-color: transparent; }
.vis { width: 21px; flex: none; border-right: 1px solid #474747; }
.vis.off::after { content: ""; width: 9px; height: 9px; border: solid #606060; border-width: 0 1px 1px 0; }
.layer-body { flex: 1; display: flex; align-items: center; gap: 6px; padding-left: 3px; }
.text { padding-left: 8px; gap: 11px; }
.text .icon { width: 11px; height: 11px; color: #ddd; }
.selected .layer-body { background: #6b6b6b; }
.thumb { width: 13px; height: 21px; border: 1px solid #2f2f2f; background: repeating-conic-gradient(#fff 0 25%, #ddd 0 50%) 0 0 / 4px 4px; display: flex; align-items: flex-end; justify-content: flex-end; }
.thumb .icon { width: 9px; height: 9px; background: #444; color: #eee; }
.thumb.green { background-image: linear-gradient(170deg, transparent 2px, #12a83a 3px 5px, transparent 6px), repeating-conic-gradient(#fff 0 25%, #ddd 0 50%); background-size: 11px 9px, 4px 4px; background-repeat: no-repeat, repeat; }
.photo { background: linear-gradient(80deg, #fff 2px, #222 3px 10px, #fff 11px); }
.layer em { margin-left: auto; font-size: 8px; color: #eee; }
.fold { width: 6px; height: 100%; margin: 0 1px 0 -2px; }
.adjust { gap: 5px; padding-left: 7px; }
.clip { width: 6px; margin-right: 1px; }
.hue { width: 11px; height: 10px; }
.adjust .chainv { margin-right: -2px; }
.white-mask { width: 12px; height: 20px; background: #fff; margin-right: 1px; }
.effects { height: 28px; display: flex; flex-direction: column; padding-left: 34px; border-bottom: 1px solid #474747; }
.effects span { display: flex; align-items: center; gap: 4px; height: 13px; }
.effects .deep { padding-left: 11px; }
.effects .bare { padding-left: 23px; }
.effects.last { border: 0; }
.layer-actions { height: 18px; flex: none; display: flex; justify-content: flex-end; gap: 10px; padding-right: 18px; border-top: 1px solid #464646; color: #999; }
.fx { font-size: 8px; font-style: italic; }

/* follower goal */
.goal { position: absolute; top: 24px; left: 50%; width: 496px; height: 34px; margin-left: -247px; display: flex; align-items: center; justify-content: space-between; padding: 0 8px; border: 2px solid #fff; border-radius: 17px; overflow: hidden; background: rgba(0, 0, 0, .33); color: #fff; font: bold 18px "Liberation Sans", sans-serif; text-shadow: 1px 1px 2px #333; }
.goal span { position: relative; }
.goal span:nth-child(3) { margin-left: 11px; }
.goal-fill { position: absolute; inset: 0 auto 0 0; width: 51%; border-radius: 0 15px 15px 0; background: repeating-linear-gradient(135deg, #80ff40 0 23px, #55ff00 23px 46px); }

/* taskbar */
.taskbar { height: 32px; flex: none; display: flex; align-items: center; background: #1c1c1c; color: #eee; }
.apps { width: 236px; height: 28px; margin: 0 0 0 auto; display: grid; grid-template-columns: repeat(8, 1fr); }
.apps button { position: relative; }
.apps svg { width: 16px; height: 16px; }
.apps .current { background: #2b2b2b; border-radius: 3px; }
.open::after { content: ""; position: absolute; bottom: 0; width: 4px; height: 2px; background: #aaa; border-radius: 1px; }
.current::after { width: 11px; background: #d0a0dc; }
.rec { position: absolute; top: 4px; right: 4px; width: 9px; height: 9px; border-radius: 50%; background: #d90808; }
.tray { flex: 1; max-width: 522px; display: flex; align-items: center; justify-content: flex-end; gap: 10px; padding-right: 12px; }
.shield { width: 11px; height: 11px; margin-left: 2px; }
.mic { width: 11px; height: 11px; color: #c6a8ca; }
.sys { width: 12px; height: 12px; }
.sys + .sys { margin-left: -5px; }
.clock { font-size: 8px; line-height: 11px; text-align: right; width: 38px; }
```
FILE: rulers.js
```js
// labels every 100 px of the document, counted away from zero
function fillRuler(id, from, to) {
  const track = document.getElementById(id);
  for (let n = from; n <= to; n += 100) {
    const mark = document.createElement('span');
    mark.textContent = Math.abs(n);
    track.appendChild(mark);
  }
}

fillRuler('ruler-x', -1000, 1900);
fillRuler('ruler-y', -100, 1600);
```
